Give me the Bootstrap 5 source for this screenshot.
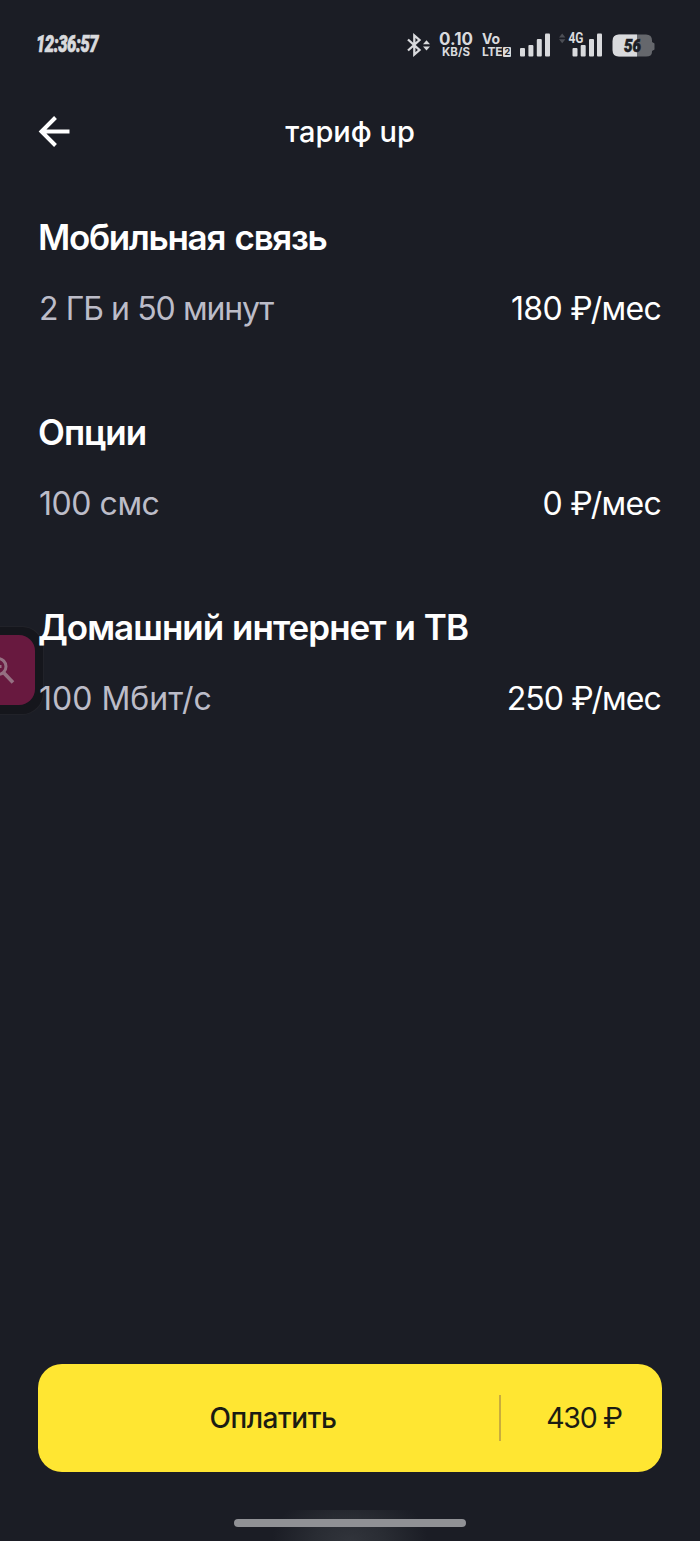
<!DOCTYPE html>
<html lang="ru" data-bs-theme="dark">
<head>
<meta charset="utf-8">
<meta name="viewport" content="width=device-width, initial-scale=1">
<title>тариф up</title>
<link href="https://cdn.jsdelivr.net/npm/bootstrap@5.3.0/dist/css/bootstrap.min.css" rel="stylesheet">
<style>
  body { background: #1b1d25; color: #fff; font-family: Inter, "Noto Sans", sans-serif; overflow: hidden; }
  .screen { width: 700px; height: 1541px; overflow: hidden; }
  .statusbar { height: 90px; padding-left: 36px; color: #d9dadd; }
  .clock { font: italic 900 23px/23px Roboto, sans-serif; width: 63px; letter-spacing: -.6px; transform: scaleX(.72); transform-origin: 0 50%; white-space: nowrap; -webkit-text-stroke: .7px #d9dadd; margin-top: -2px; }
  .net-rate, .volte { font-weight: 700; line-height: 1; white-space: nowrap; }
  .net-rate { width: 34px; margin-left: 9px; }
  .net-rate .value { font-size: 17px; line-height: 12px; }
  .net-rate .unit { font-size: 11.5px; line-height: 9px; margin-top: 3px; }
  .volte { width: 30px; margin-left: 9px; }
  .volte .voice { font-size: 14px; line-height: 12px; }
  .volte .lte { font-size: 12px; line-height: 10px; letter-spacing: -.2px; margin-top: 2px; }
  .sim { width: 8px; height: 10px; border-radius: 1px; background: #d9dadd; color: #1b1d25; font-size: 9px; line-height: 10px; margin-left: 1px; letter-spacing: 0; }
  .topbar { height: 84px; padding: 0 38px; display: grid; grid-template-columns: 34px 1fr 34px; }
  .page-title { font-size: 29px; line-height: 34px; font-weight: 500; margin: 0; }
  .content { padding: 41px 39px 0; z-index: 1; }
  .section { height: 195px; }
  .section h2 { font-size: 35px; line-height: 44px; font-weight: 600; margin: 0 0 28px -1px; white-space: nowrap; letter-spacing: -1px; }
  .line { font-size: 32px; line-height: 44px; white-space: nowrap; letter-spacing: -.7px; }
  .mobile h2 { letter-spacing: -1.3px; word-spacing: 2px; }
  .mobile .muted { letter-spacing: -1.2px; word-spacing: .7px; }
  .options .muted { letter-spacing: -.45px; }
  .home h2 { letter-spacing: -.98px; word-spacing: 1px; }
  .home .muted { letter-spacing: 0; }
  .home .price { letter-spacing: -.9px; }
  .muted { color: #bcbcc8; }
  .pay { height: 108px; margin: 0 38px; border: 0; border-radius: 24px; background: #ffe632; color: #1b1c12; padding: 0; width: 624px; }
  .pay .label { width: 461px; padding-left: 9px; font-size: 28px; font-weight: 500; letter-spacing: -.5px; }
  .pay .rule { width: 1.5px; height: 46px; background: #c9ad3c; }
  .pay .sum { width: 161px; padding-left: 6px; font-size: 28.5px; letter-spacing: -1.3px; word-spacing: 0; }
  .gesture { height: 31px; margin-top: 38px; background: radial-gradient(ellipse 78px 52px at 50% 100%, #31343b 0, #292c33 45%, rgba(27,29,37,0) 100%); }
  .gesture i { width: 232px; height: 8px; border-radius: 4px; background: #909195; margin-top: 9px; }
  .bubble { position: absolute; left: -48px; top: 626px; width: 92px; height: 89px; border-radius: 22px; background: rgba(20,20,25,.72); border: 1px solid rgba(38,39,45,.8); z-index: 0; }
  .bubble div { margin: 8px 8px 0 0; width: 70px; height: 70px; border-radius: 16px; background: #68193f; overflow: hidden; }
</style>
</head>
<body>
<div class="screen d-flex flex-column position-relative">
  <div class="bubble d-flex justify-content-end"><div>
    <svg width="70" height="70" viewBox="0 0 70 70" fill="none" stroke="#957082" stroke-width="3"><circle cx="33" cy="31.500" r="8"/><path d="M38.500 37.500 48 47.500" stroke-width="3.6"/><path d="M29.500 31.500h7"/></svg>
  </div></div>

  <header class="statusbar d-flex align-items-center flex-shrink-0">
    <div class="clock">12:36:57</div>
    <svg class="ms-auto" width="24" height="24" viewBox="0 0 24 24" fill="none" stroke="#d9dadd" stroke-width="2.3"><path d="M2 6.500 13.500 17 8.300 21.500V2.500L13.500 7 2 17.500"/><path d="m17 11.200 3.500-4 3.500 4zM17 13.500h7l-3.500 4z" fill="#d9dadd" stroke="none"/></svg>
    <div class="net-rate text-center"><div class="value">0.10</div><div class="unit">KB/S</div></div>
    <div class="volte"><div class="voice">Vo</div><div class="lte d-flex">LTE<span class="sim text-center">2</span></div></div>
    <svg class="overflow-visible" width="144" height="26" viewBox="0 0 144 26" style="margin-right:44px" fill="#d9dadd">
      <g><rect x="8" y="16" width="5" height="8.5" rx="1"/><rect x="16.4" y="13" width="5" height="11.5" rx="1"/><rect x="24.8" y="7" width="5" height="17.5" rx="1"/><rect x="33" y="1.5" width="5" height="23" rx="1"/></g>
      <path d="m47 5.600 3.200-4 3.200 4zM47 7.300h6.400l-3.200 4z" fill="#4c4e55"/>
      <text x="56.5" y="11.4" font-family="Roboto" font-weight="700" font-size="14" textLength="15" lengthAdjust="spacingAndGlyphs">4G</text>
      <g><rect x="60.5" y="16" width="5" height="8.5" rx="1"/><rect x="68.7" y="13" width="5" height="11.5" rx="1"/><rect x="77" y="7" width="5" height="17.5" rx="1"/><rect x="85" y="1.5" width="5" height="23" rx="1"/></g>
      <path d="M107 2.500h27q6 0 6 6v1.500l2.500 1.500v6l-2.500 1.500v1q0 4.500-6 4.500h-27q-6 0-6-6v-10q0-6 6-6z" fill="#65676c"/>
      <path d="M125 2.500v22h-18q-6.500 0-6.500-6.500v-9q0-6.500 6.500-6.500z"/>
      <text x="112" y="19.500" font-family="Roboto" font-weight="900" font-style="italic" font-size="17.5" textLength="17" lengthAdjust="spacingAndGlyphs" fill="#1b1d25" stroke="#1b1d25" stroke-width=".6">56</text>
    </svg>
  </header>

  <nav class="topbar align-items-center flex-shrink-0">
    <svg width="34" height="34" viewBox="0 0 34 34" fill="none" stroke="#fff" stroke-width="4"><path d="M31.500 16.500H4M17.500 2.500l-14 14 14 14"/></svg>
    <h1 class="page-title text-center">тариф up</h1>
  </nav>

  <main class="content flex-grow-1 position-relative">
    <section class="section mobile"><h2>Мобильная связь</h2><div class="line d-flex justify-content-between"><span class="muted">2 ГБ и 50 минут</span><span class="price">180 ₽/мес</span></div></section>
    <section class="section options"><h2>Опции</h2><div class="line d-flex justify-content-between"><span class="muted">100 смс</span><span class="price">0 ₽/мес</span></div></section>
    <section class="section home"><h2>Домашний интернет и ТВ</h2><div class="line d-flex justify-content-between"><span class="muted">100 Мбит/с</span><span class="price">250 ₽/мес</span></div></section>
  </main>

  <button class="pay btn d-flex align-items-center flex-shrink-0" type="button"><span class="label text-center">Оплатить</span><span class="rule"></span><span class="sum text-center">430 ₽</span></button>
  <div class="gesture d-flex justify-content-center flex-shrink-0"><i></i></div>
</div>
<script src="https://cdn.jsdelivr.net/npm/bootstrap@5.3.0/dist/js/bootstrap.bundle.min.js"></script>
</body>
</html>
